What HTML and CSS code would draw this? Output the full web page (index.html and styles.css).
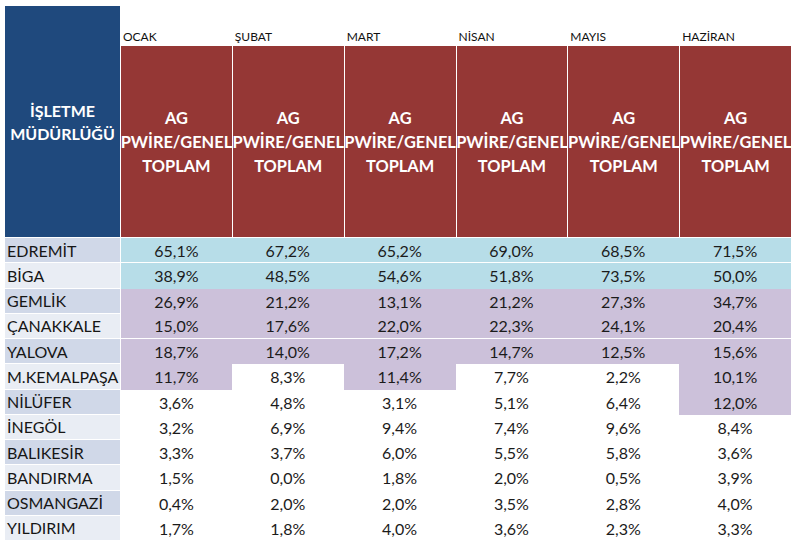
FILE: index.html
```html
<!DOCTYPE html>
<html lang="tr">
<head>
<meta charset="utf-8">
<title>AG PWİRE/GENEL TOPLAM</title>
<link rel="stylesheet" href="styles.css">
</head>
<body>
<div class="sheet">
  <div class="corner">İŞLETME<br>MÜDÜRLÜĞÜ</div>
  <div class="month">OCAK</div>
  <div class="month">ŞUBAT</div>
  <div class="month">MART</div>
  <div class="month">NİSAN</div>
  <div class="month">MAYIS</div>
  <div class="month">HAZİRAN</div>
  <div class="head">AG<br>PWİRE/GENEL<br>TOPLAM</div>
  <div class="head">AG<br>PWİRE/GENEL<br>TOPLAM</div>
  <div class="head">AG<br>PWİRE/GENEL<br>TOPLAM</div>
  <div class="head">AG<br>PWİRE/GENEL<br>TOPLAM</div>
  <div class="head">AG<br>PWİRE/GENEL<br>TOPLAM</div>
  <div class="head">AG<br>PWİRE/GENEL<br>TOPLAM</div>

  <div class="name dark">EDREMİT</div>
  <div class="val blue sep first">65,1%</div><div class="val blue sep">67,2%</div><div class="val blue sep">65,2%</div><div class="val blue sep">69,0%</div><div class="val blue sep">68,5%</div><div class="val blue sep">71,5%</div>

  <div class="name light">BİGA</div>
  <div class="val blue first">38,9%</div><div class="val blue">48,5%</div><div class="val blue">54,6%</div><div class="val blue">51,8%</div><div class="val blue">73,5%</div><div class="val blue">50,0%</div>

  <div class="name dark">GEMLİK</div>
  <div class="val purple first">26,9%</div><div class="val purple">21,2%</div><div class="val purple">13,1%</div><div class="val purple">21,2%</div><div class="val purple">27,3%</div><div class="val purple">34,7%</div>

  <div class="name light">ÇANAKKALE</div>
  <div class="val purple sep first">15,0%</div><div class="val purple sep">17,6%</div><div class="val purple sep">22,0%</div><div class="val purple sep">22,3%</div><div class="val purple sep">24,1%</div><div class="val purple sep">20,4%</div>

  <div class="name dark">YALOVA</div>
  <div class="val purple first">18,7%</div><div class="val purple">14,0%</div><div class="val purple">17,2%</div><div class="val purple">14,7%</div><div class="val purple">12,5%</div><div class="val purple">15,6%</div>

  <div class="name light">M.KEMALPAŞA</div>
  <div class="val purple first">11,7%</div><div class="val">8,3%</div><div class="val purple">11,4%</div><div class="val">7,7%</div><div class="val">2,2%</div><div class="val purple">10,1%</div>

  <div class="name dark">NİLÜFER</div>
  <div class="val first">3,6%</div><div class="val">4,8%</div><div class="val">3,1%</div><div class="val">5,1%</div><div class="val">6,4%</div><div class="val purple">12,0%</div>

  <div class="name light">İNEGÖL</div>
  <div class="val first">3,2%</div><div class="val">6,9%</div><div class="val">9,4%</div><div class="val">7,4%</div><div class="val">9,6%</div><div class="val">8,4%</div>

  <div class="name dark">BALIKESİR</div>
  <div class="val first">3,3%</div><div class="val">3,7%</div><div class="val">6,0%</div><div class="val">5,5%</div><div class="val">5,8%</div><div class="val">3,6%</div>

  <div class="name light">BANDIRMA</div>
  <div class="val first">1,5%</div><div class="val">0,0%</div><div class="val">1,8%</div><div class="val">2,0%</div><div class="val">0,5%</div><div class="val">3,9%</div>

  <div class="name dark">OSMANGAZİ</div>
  <div class="val first">0,4%</div><div class="val">2,0%</div><div class="val">2,0%</div><div class="val">3,5%</div><div class="val">2,8%</div><div class="val">4,0%</div>

  <div class="name light">YILDIRIM</div>
  <div class="val first">1,7%</div><div class="val">1,8%</div><div class="val">4,0%</div><div class="val">3,6%</div><div class="val">2,3%</div><div class="val">3,3%</div>
</div>
</body>
</html>
```

FILE: styles.css
```css
* { box-sizing: border-box; }
html, body {
  margin: 0;
  padding: 0;
  background: #ffffff;
}
body {
  font-family: Lato, "Liberation Sans", sans-serif;
  color: #1b1b1b;
}
.sheet {
  display: grid;
  grid-template-columns: 115px repeat(6, minmax(0, 1fr));
  grid-template-rows: 40px 192px repeat(12, 25.25px);
  width: 786px;
  margin: 6px 0 0 5px;
}
.corner {
  grid-row: 1 / 3;
  grid-column: 1;
  background: #1f497d;
  border-bottom: 1px solid #ffffff;
  color: #ffffff;
  font-weight: 700;
  font-size: 16px;
  line-height: 23px;
  display: flex;
  align-items: center;
  justify-content: center;
  text-align: center;
  white-space: nowrap;
}
.month {
  grid-row: 1;
  font-size: 12px;
  line-height: 14px;
  color: #111111;
  display: flex;
  align-items: flex-end;
  padding: 0 0 2px 2px;
  border-left: 1px solid #ffffff;
}
.head {
  grid-row: 2;
  background: #953735;
  border-left: 1px solid #ffffff;
  border-bottom: 1px solid #ffffff;
  color: #ffffff;
  font-weight: 700;
  font-size: 16.4px;
  line-height: 24px;
  display: flex;
  align-items: center;
  justify-content: center;
  text-align: center;
  white-space: nowrap;
  overflow: visible;
}
.name {
  font-size: 16px;
  display: flex;
  align-items: center;
  padding-left: 2px;
  border-bottom: 1px solid #ffffff;
  white-space: nowrap;
  color: #161616;
}
.name.dark { background: #d0d8e8; }
.name.light { background: #e9edf4; }
.val {
  font-size: 16px;
  display: flex;
  align-items: center;
  justify-content: center;
  white-space: nowrap;
  background: #ffffff;
}
.val.first { border-left: 1px solid #ffffff; }
.val.blue { background: #b7dde8; }
.val.purple { background: #ccc1da; }
.val.sep { border-bottom: 1px solid #ffffff; }
```
